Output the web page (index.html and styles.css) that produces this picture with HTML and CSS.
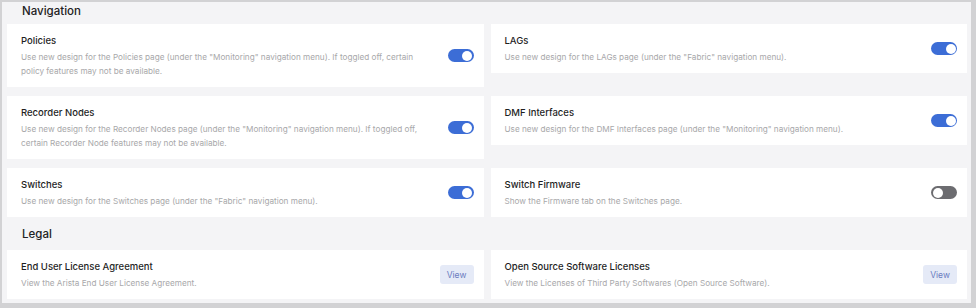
FILE: index.html
```html
<!DOCTYPE html>
<html lang="en">
<head>
  <meta charset="UTF-8" />
  <meta name="viewport" content="width=device-width, initial-scale=1.0" />
  <title>Settings</title>
  <link rel="stylesheet" href="styles.css">
</head>
<body>
  <div class="frame">
    <!-- Navigation settings -->
    <section class="section nav">
      <div class="section-title">Navigation</div>
      <div class="grid">
        <div class="card">
          <div class="text">
            <div class="name">Policies</div>
            <div class="desc">Use new design for the Policies page (under the "Monitoring" navigation menu). If toggled off, certain policy features may not be available.</div>
          </div>
          <span class="toggle on"></span>
        </div>
        <div class="card">
          <div class="text">
            <div class="name">LAGs</div>
            <div class="desc">Use new design for the LAGs page (under the "Fabric" navigation menu).</div>
          </div>
          <span class="toggle on"></span>
        </div>
        <div class="card">
          <div class="text">
            <div class="name">Recorder Nodes</div>
            <div class="desc">Use new design for the Recorder Nodes page (under the "Monitoring" navigation menu). If toggled off, certain Recorder Node features may not be available.</div>
          </div>
          <span class="toggle on"></span>
        </div>
        <div class="card">
          <div class="text">
            <div class="name">DMF Interfaces</div>
            <div class="desc">Use new design for the DMF Interfaces page (under the "Monitoring" navigation menu).</div>
          </div>
          <span class="toggle on"></span>
        </div>
        <div class="card">
          <div class="text">
            <div class="name">Switches</div>
            <div class="desc">Use new design for the Switches page (under the "Fabric" navigation menu).</div>
          </div>
          <span class="toggle on"></span>
        </div>
        <div class="card">
          <div class="text">
            <div class="name">Switch Firmware</div>
            <div class="desc">Show the Firmware tab on the Switches page.</div>
          </div>
          <span class="toggle"></span>
        </div>
      </div>
    </section>

    <!-- Legal -->
    <section class="section legal">
      <div class="section-title">Legal</div>
      <div class="grid">
        <div class="card">
          <div class="text">
            <div class="name">End User License Agreement</div>
            <div class="desc">View the Arista End User License Agreement.</div>
          </div>
          <button class="view">View</button>
        </div>
        <div class="card">
          <div class="text">
            <div class="name">Open Source Software Licenses</div>
            <div class="desc">View the Licenses of Third Party Softwares (Open Source Software).</div>
          </div>
          <button class="view">View</button>
        </div>
      </div>
    </section>
  </div>
</body>
</html>
```
FILE: styles.css
```css
html, body {
  margin: 0;
  padding: 0;
  width: 976px;
  height: 308px;
  overflow: hidden;
  background: #d2d2d4;
  font-family: Inter, "Noto Sans", sans-serif;
}
.frame {
  box-sizing: border-box;
  width: 969px;
  height: 301px;
  margin: 2px 0 0 2px;
  padding: 0 4px 0 5px;
  background: #f4f4f6;
  overflow: hidden;
}
.section-title {
  height: 18px;
  line-height: 18px;
  padding-left: 15px;
  font-size: 11.5px;
  font-weight: 500;
  color: #222;
  margin-bottom: 4px;
}
.legal {
  margin-top: 8px;
}
.legal .section-title {
  margin-bottom: 7px;
}
.grid {
  display: grid;
  grid-template-columns: 1fr 1fr;
  column-gap: 7px;
  row-gap: 9px;
  align-items: start;
}
.card {
  display: flex;
  align-items: center;
  justify-content: space-between;
  background: #fff;
  padding: 9px 10px 9px 14px;
}
.text {
  flex: 1;
  padding-right: 24px;
}
.name {
  font-size: 9.5px;
  font-weight: 500;
  line-height: 16px;
  color: #1f1f1f;
}
.desc {
  font-size: 8.2px;
  line-height: 14px;
  color: #a8a8aa;
  margin-top: 1px;
}
.toggle {
  position: relative;
  flex: none;
  width: 26px;
  height: 13px;
  border-radius: 7px;
  background: #6c6c70;
}
.toggle::after {
  content: '';
  position: absolute;
  top: 1.5px;
  left: 1.5px;
  width: 10px;
  height: 10px;
  border-radius: 50%;
  background: #fff;
}
.toggle.on {
  background: #3c6dd6;
}
.toggle.on::after {
  left: auto;
  right: 1.5px;
}
.view {
  flex: none;
  width: 34px;
  height: 19px;
  border: none;
  border-radius: 3px;
  background: #e5eaf7;
  color: #6a7cbf;
  font-family: Inter, "Noto Sans", sans-serif;
  font-size: 8.5px;
  padding: 0;
}
```
